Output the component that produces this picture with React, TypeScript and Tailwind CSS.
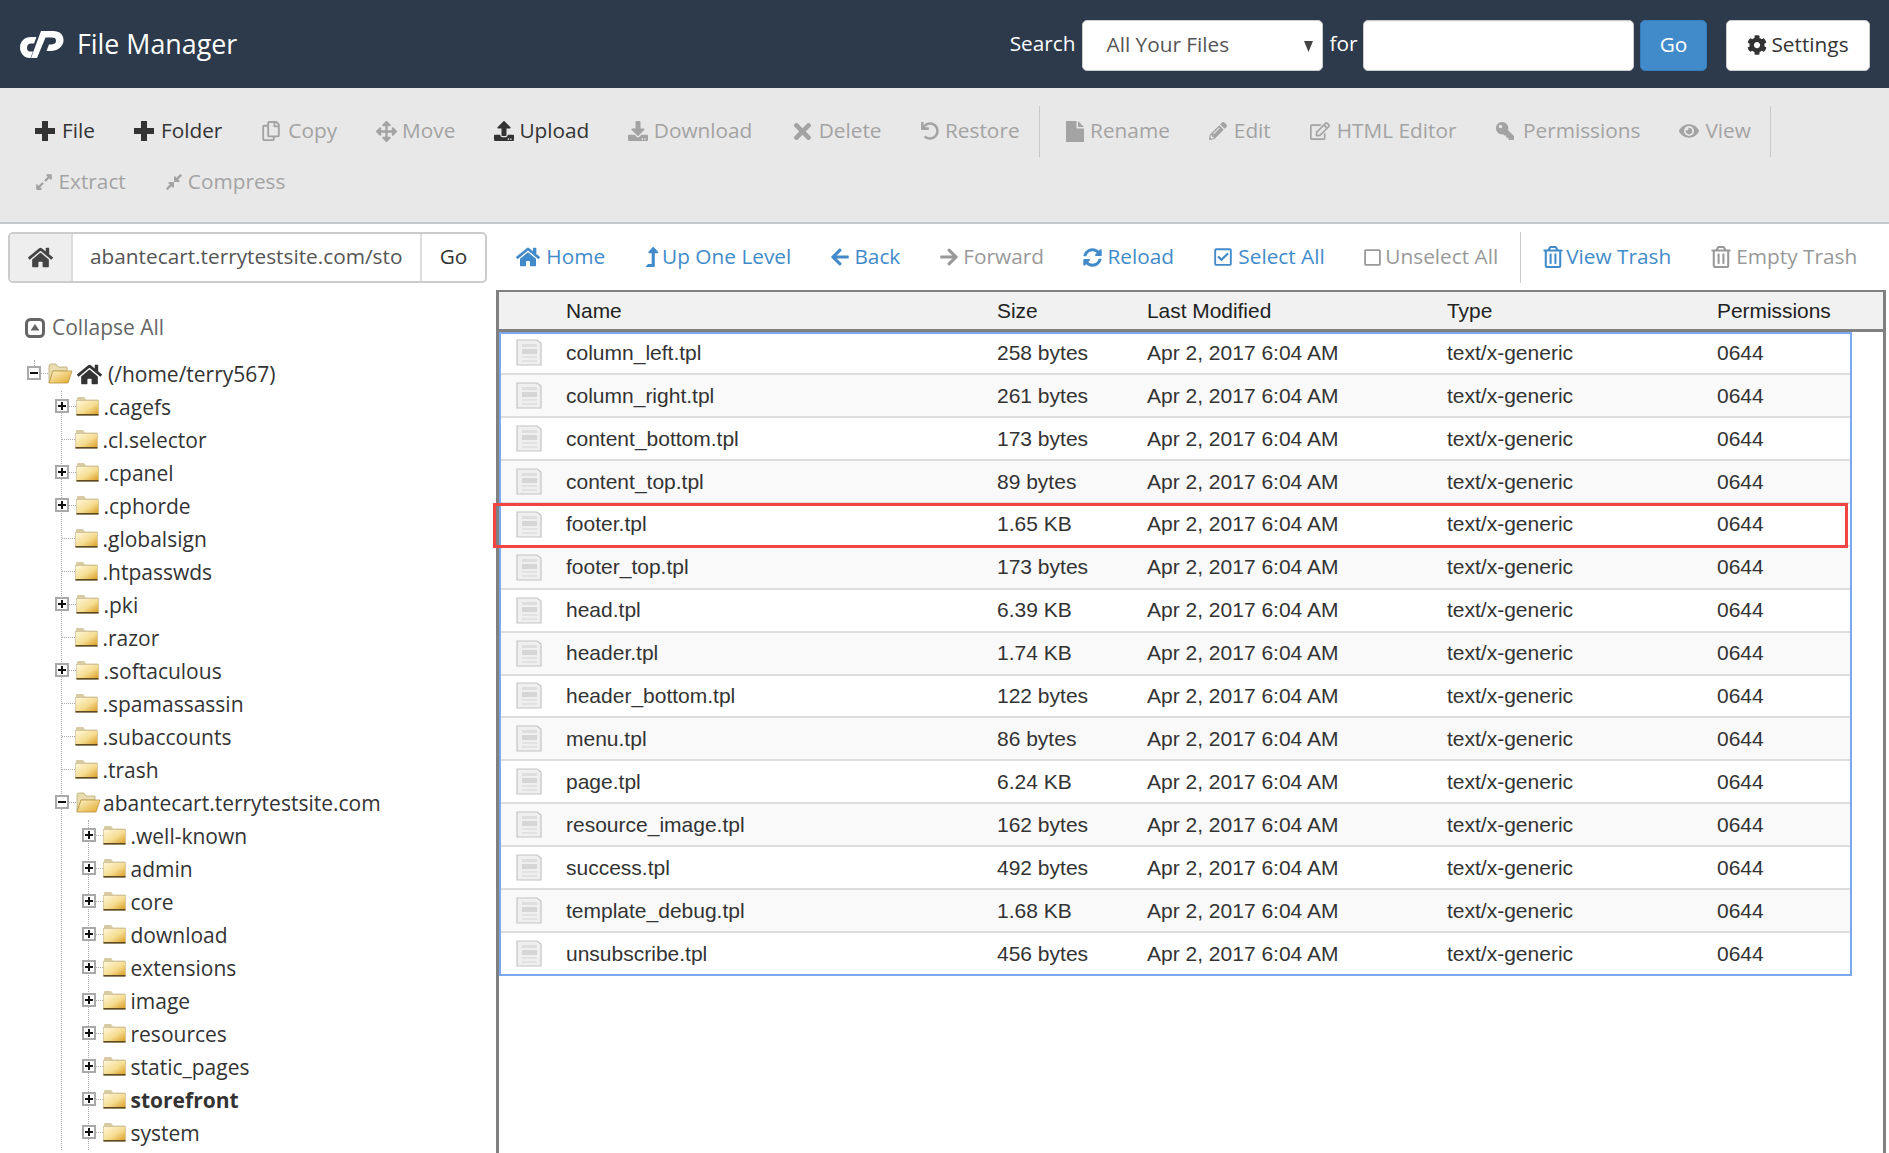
import type { ReactNode } from "react";
import {
  FaArrowLeft,
  FaArrowRight,
  FaArrowsAlt,
  FaCog,
  FaCompressAlt,
  FaDownload,
  FaExpandAlt,
  FaEye,
  FaHome,
  FaKey,
  FaLevelUpAlt,
  FaPencilAlt,
  FaRegCheckSquare,
  FaRegCopy,
  FaRegEdit,
  FaRegSquare,
  FaRegTrashAlt,
  FaSyncAlt,
  FaTimes,
  FaUndo,
  FaUpload,
} from "react-icons/fa";

type ToolItem = {
  label: string;
  icon: ReactNode;
  iconBox: string;
  off?: boolean;
  sep?: boolean;
};

const PlusIcon = () => (
  <svg width="20" height="20" viewBox="0 0 20 20" fill="currentColor">
    <path d="M7 0h6v7h7v6h-7v7H7v-7H0V7h7z" />
  </svg>
);

const PageIcon = () => (
  <svg width="18" height="21" viewBox="0 0 18 21" fill="currentColor">
    <path d="M0 0h10.5v7.5H18V21H0z" />
    <path d="M12 0l6 6h-6z" />
  </svg>
);

const tools: ToolItem[] = [
  { label: "File", icon: <PlusIcon />, iconBox: "w-[27.5px]" },
  { label: "Folder", icon: <PlusIcon />, iconBox: "w-[27px]" },
  { label: "Copy", icon: <FaRegCopy size={20} />, iconBox: "w-[27px]", off: true },
  { label: "Move", icon: <FaArrowsAlt size={21} />, iconBox: "w-[26px]", off: true },
  { label: "Upload", icon: <FaUpload size={20} />, iconBox: "w-[25px]" },
  { label: "Download", icon: <FaDownload size={20} />, iconBox: "w-[25.5px]", off: true },
  { label: "Delete", icon: <FaTimes size={25} className="-ml-[1px] shrink-0" />, iconBox: "w-[27.4px]", off: true },
  { label: "Restore", icon: <FaUndo size={18} />, iconBox: "w-[24.5px]", off: true, sep: true },
  { label: "Rename", icon: <PageIcon />, iconBox: "w-[24.5px]", off: true },
  { label: "Edit", icon: <FaPencilAlt size={18} />, iconBox: "w-[25px]", off: true },
  { label: "HTML Editor", icon: <FaRegEdit size={20} />, iconBox: "w-[27px]", off: true },
  { label: "Permissions", icon: <FaKey size={18} className="scale-x-[-1]" />, iconBox: "w-[27.5px]", off: true },
  { label: "View", icon: <FaEye size={20} />, iconBox: "w-[26px]", off: true, sep: true },
  { label: "Extract", icon: <FaExpandAlt size={18} />, iconBox: "w-[24px]", off: true },
  { label: "Compress", icon: <FaCompressAlt size={18} />, iconBox: "w-[23px]", off: true },
];

const navs: ToolItem[] = [
  { label: "Home", icon: <FaHome size={24} />, iconBox: "w-[30.8px]" },
  { label: "Up One Level", icon: <FaLevelUpAlt size={20} className="-ml-[2px] shrink-0" />, iconBox: "w-[18px]" },
  { label: "Back", icon: <FaArrowLeft size={20} />, iconBox: "w-[24.2px]" },
  { label: "Forward", icon: <FaArrowRight size={20} />, iconBox: "w-[24px]", off: true },
  { label: "Reload", icon: <FaSyncAlt size={19} />, iconBox: "w-[24.5px]" },
  { label: "Select All", icon: <FaRegCheckSquare size={20} />, iconBox: "w-[25.3px]" },
  { label: "Unselect All", icon: <FaRegSquare size={19} className="-ml-[1px] shrink-0" />, iconBox: "w-[21.6px]", off: true, sep: true },
  { label: "View Trash", icon: <FaRegTrashAlt size={22} />, iconBox: "w-[24px]" },
  { label: "Empty Trash", icon: <FaRegTrashAlt size={22} />, iconBox: "w-[26px]", off: true },
];

const files = [
  ["column_left.tpl", "258 bytes"],
  ["column_right.tpl", "261 bytes"],
  ["content_bottom.tpl", "173 bytes"],
  ["content_top.tpl", "89 bytes"],
  ["footer.tpl", "1.65 KB"],
  ["footer_top.tpl", "173 bytes"],
  ["head.tpl", "6.39 KB"],
  ["header.tpl", "1.74 KB"],
  ["header_bottom.tpl", "122 bytes"],
  ["menu.tpl", "86 bytes"],
  ["page.tpl", "6.24 KB"],
  ["resource_image.tpl", "162 bytes"],
  ["success.tpl", "492 bytes"],
  ["template_debug.tpl", "1.68 KB"],
  ["unsubscribe.tpl", "456 bytes"],
];

const topFolders: [string, boolean][] = [
  [".cagefs", true],
  [".cl.selector", false],
  [".cpanel", true],
  [".cphorde", true],
  [".globalsign", false],
  [".htpasswds", false],
  [".pki", true],
  [".razor", false],
  [".softaculous", true],
  [".spamassassin", false],
  [".subaccounts", false],
  [".trash", false],
];

const siteFolders = [
  ".well-known",
  "admin",
  "core",
  "download",
  "extensions",
  "image",
  "resources",
  "static_pages",
  "storefront",
  "system",
];

function Logo() {
  return (
    <svg width="44" height="30" viewBox="0 0 44 30" fill="#fff">
      <path d="M16.5 8 L11 8 C4 8 0 13 0 18.5 C0 24 4 29 10 29 L10.5 29 L13 22.5 L10 22.5 C8 22.5 7 21 7 18.5 C7 16 9 14.5 11 14.5 L14 14.5 Z" />
      <path d="M21 2 L33 2 C40 2 44 6 43.5 12 C43 18 37 22 31 22 L26.5 22 L29 15.5 L31 15.5 C34 15.5 36 14 36 12 C36 9.5 35 8.5 32 8.5 L25.5 8.5 L17 29 L11 29 Z" />
    </svg>
  );
}

function Folder({ open }: { open?: boolean }) {
  if (open) {
    return (
      <svg width="25" height="21" viewBox="0 0 25 21" className="shrink-0">
        <defs>
          <linearGradient id="folderOpen" x1="0" y1="0" x2="1" y2="1">
            <stop offset="0" stopColor="#fdf4cc" />
            <stop offset="1" stopColor="#e3a92a" />
          </linearGradient>
        </defs>
        <path d="M1 20 L1 3 Q1 1 3 1 L8 1 L10 4 L19 4 L19 8 L5 8 Z" fill="#e9dcae" stroke="#b8a878" strokeWidth="0.8" />
        <path d="M5 8 L24 8 L20 20 L1 20 Z" fill="url(#folderOpen)" stroke="#b8963c" strokeWidth="0.8" />
      </svg>
    );
  }
  return (
    <svg width="23" height="20" viewBox="0 0 23 20" className="shrink-0">
      <defs>
        <linearGradient id="folderClosed" x1="0" y1="0" x2="1" y2="1">
          <stop offset="0" stopColor="#fff8dc" />
          <stop offset="0.55" stopColor="#f5dc90" />
          <stop offset="1" stopColor="#d9991c" />
        </linearGradient>
      </defs>
      <path d="M1 5 L1 2 Q1 1 2 1 L8 1 L10 3.5 L22 3.5 L22 6 L1 6 Z" fill="#d8cba4" />
      <rect x="0.5" y="4.5" width="22" height="14.5" fill="url(#folderClosed)" stroke="#cbbd92" strokeWidth="0.7" />
      <rect x="0.5" y="18" width="22" height="1.6" fill="#5c4a22" />
    </svg>
  );
}

function Expander({ open }: { open?: boolean }) {
  return (
    <div className="flex h-[14px] w-[14px] shrink-0 items-center justify-center border-2 border-[#a9a9a9] bg-white">
      <svg width="8" height="8" viewBox="0 0 8 8">
        <rect x="0" y="3" width="8" height="2" fill="#111" />
        {!open && <rect x="3" y="0" width="2" height="8" fill="#111" />}
      </svg>
    </div>
  );
}

function TreeRow({
  label,
  expandable,
  open,
  bold,
}: {
  label: string;
  expandable?: boolean;
  open?: boolean;
  bold?: boolean;
}) {
  return (
    <div className="flex h-[33px] items-center">
      {expandable ? (
        <>
          <div className="-ml-[7px] -mt-[3px]">
            <Expander open={open} />
          </div>
          <div className="-mt-[3px] w-[7px] border-t border-dotted border-[#aaa]" />
        </>
      ) : (
        <div className="-mt-[3px] w-[13px] border-t border-dotted border-[#aaa]" />
      )}
      <div className="-mt-[3px]">
        <Folder open={open} />
      </div>
      <span className={`whitespace-nowrap ${open ? "ml-[2px]" : "ml-[4.5px]"} ${bold ? "font-bold" : ""}`}>{label}</span>
    </div>
  );
}

function Sidebar() {
  return (
    <div className="w-[496px] shrink-0 text-[21px] text-[#333]">
      <div className="mt-[21px] flex h-[33px] items-center gap-[7px] pl-[25px] text-[#666]">
        <svg width="20" height="20" viewBox="0 0 20 20">
          <rect x="1.5" y="1.5" width="17" height="17" rx="4" fill="#fff" stroke="#666" strokeWidth="3" />
          <path d="M10 6 L14.5 12.5 L5.5 12.5 Z" fill="#666" />
        </svg>
        Collapse All
      </div>
      <div className="mt-[14px] flex h-[33px] items-center pl-[27px]">
        <div className="-mt-[9px] flex flex-col items-center">
          <div className="h-[6px] border-l border-dotted border-[#aaa]" />
          <Expander open />
        </div>
        <div className="-mt-[3px] w-[7px] border-t border-dotted border-[#aaa]" />
        <div className="-mt-[3px]">
          <Folder open />
        </div>
        <FaHome size={25} className="ml-[4px] text-[#333]" />
        <span className="ml-[6px]">(/home/terry567)</span>
      </div>
      <div className="ml-[61px] border-l border-dotted border-[#aaa]">
        {topFolders.map(([name, exp]) => (
          <TreeRow key={name} label={name} expandable={exp} />
        ))}
        <TreeRow label="abantecart.terrytestsite.com" expandable open />
        <div className="ml-[26px] border-l border-dotted border-[#aaa]">
          {siteFolders.map((name) => (
            <TreeRow key={name} label={name} expandable bold={name === "storefront"} />
          ))}
        </div>
      </div>
    </div>
  );
}

function FileIcon() {
  return (
    <svg width="26" height="27" viewBox="0 0 26 27">
      <path d="M1 1 L21 1 L25 4 L25 26 L1 26 Z" fill="#efefef" stroke="#c4c4c4" strokeWidth="1.2" />
      <rect x="6" y="5" width="15" height="3" fill="#dedede" />
      <rect x="6" y="10" width="15" height="5" fill="#d6d6d6" />
      <rect x="6" y="17" width="15" height="2" fill="#e2e2e2" />
      <rect x="6" y="21" width="15" height="2" fill="#e2e2e2" />
    </svg>
  );
}

const colGrid = "grid grid-cols-[67px_431px_150px_300px_270px_1fr] items-center";

function FileTable() {
  return (
    <div className="mr-[3px] min-w-0 flex-1 border-l-[3px] border-r-[3px] border-t-[2px] border-[#808080] font-['Liberation_Sans',Arial,sans-serif] text-[#333]">
      <div className={`${colGrid} h-[40px] border-b-[3px] border-[#808080] bg-[#f1f1f1] text-[20.9px] text-[#222]`}>
        <div />
        <div>Name</div>
        <div>Size</div>
        <div>Last Modified</div>
        <div>Type</div>
        <div>Permissions</div>
      </div>
      <div className="relative w-[1353px] text-[21px] outline-2 -outline-offset-2 outline-[#7aa9f0]">
        {files.map(([name, size], i) => (
          <div
            key={name}
            className={`${colGrid} h-[42.95px] border-b-2 border-[#ddd] ${i % 2 ? "bg-[#f9f9f9]" : "bg-white"}`}
          >
            <div className="pl-[17px]">
              <FileIcon />
            </div>
            <div>{name}</div>
            <div>{size}</div>
            <div>Apr 2, 2017 6:04 AM</div>
            <div>text/x-generic</div>
            <div>0644</div>
          </div>
        ))}
        <div className="absolute left-[-6px] top-[171px] h-[44.5px] w-[1355px] border-[3px] border-[#f44343]" />
      </div>
    </div>
  );
}

export default function App() {
  return (
    <div className="h-[1153px] w-[1889px] overflow-hidden bg-white font-['Open_Sans',sans-serif] text-[20.8px]">
      {/* top bar */}
      <div className="flex h-[88px] items-center bg-[#2c3a4b] pl-[20px] pr-[19px] text-white">
        <Logo />
        <span className="ml-[13px] text-[26.8px]">File Manager</span>
        <div className="ml-auto flex items-center">
          <span className="mr-[7px]">Search</span>
          <div className="relative mt-[2px]">
            <select className="h-[51px] w-[241px] appearance-none rounded-[5px] border border-[#ccc] bg-white pl-[23px] text-[#555]">
              <option>All Your Files</option>
            </select>
            <svg width="9" height="11" viewBox="0 0 9 11" className="absolute right-[10px] top-[21px]">
              <path d="M0 0 L9 0 L4.5 11 Z" fill="#444" />
            </svg>
          </div>
          <span className="ml-[6px] mr-[5px]">for</span>
          <input className="mt-[2px] h-[51px] w-[271.5px] rounded-[5px] border border-[#ccc] bg-white shadow-[inset_0_1px_1px_rgba(0,0,0,0.075)]" />
          <button className="ml-[6px] mt-[2px] h-[51px] w-[67px] rounded-[5px] border border-[#357ebd] bg-[#428bca] text-white">
            Go
          </button>
          <button className="ml-[19px] mt-[2px] flex h-[51px] w-[144px] items-center justify-center gap-[4px] rounded-[5px] border border-[#ccc] bg-white text-[#333]">
            <FaCog size={20} />
            Settings
          </button>
        </div>
      </div>

      {/* action toolbar */}
      <div className="flex h-[136px] flex-wrap content-start border-b-2 border-[#c6c9cc] bg-[#e8e8e8] pl-[15px] pt-[17.5px]">
        {tools.map((t) => (
          <div key={t.label} className="flex h-[51px] items-center">
            <div className={`flex items-center px-[19.5px] ${t.off ? "text-[#a3a3a3]" : "text-[#333]"}`}>
              <span className={`flex shrink-0 ${t.iconBox}`}>{t.icon}</span>
              {t.label}
            </div>
            {t.sep && <div className="mr-[6px] h-full w-px bg-[#c8c8c8]" />}
          </div>
        ))}
      </div>

      {/* path bar and nav */}
      <div className="flex h-[66px] items-center">
        <div className="w-[496px] shrink-0 pl-[8px]">
          <div className="flex h-[51px] w-[479px] overflow-hidden rounded-[5px] border-2 border-[#ccc] text-[#555]">
            <div className="flex w-[63px] shrink-0 items-center justify-center border-r-2 border-[#ddd] bg-[#eee] text-[#444]">
              <FaHome size={25} />
            </div>
            <input
              readOnly
              value="abantecart.terrytestsite.com/storefront/view/default/template/common"
              className="min-w-0 flex-1 bg-white px-[17px] text-[#555] outline-none"
            />
            <div className="flex w-[65px] shrink-0 items-center justify-center border-l-2 border-[#ddd] text-[#333]">Go</div>
          </div>
        </div>
        <div className="flex h-[51px] items-center">
          {navs.map((n) => (
            <div key={n.label} className="flex h-full items-center">
              <div className={`flex items-center px-[19.5px] ${n.off ? "text-[#999]" : "text-[#428bca]"}`}>
                <span className={`flex shrink-0 ${n.iconBox}`}>{n.icon}</span>
                {n.label}
              </div>
              {n.sep && <div className="ml-[2.4px] mr-[1.6px] h-full w-px bg-[#ccc]" />}
            </div>
          ))}
        </div>
      </div>

      <div className="flex h-[863px] overflow-hidden">
        <Sidebar />
        <FileTable />
      </div>
    </div>
  );
}
